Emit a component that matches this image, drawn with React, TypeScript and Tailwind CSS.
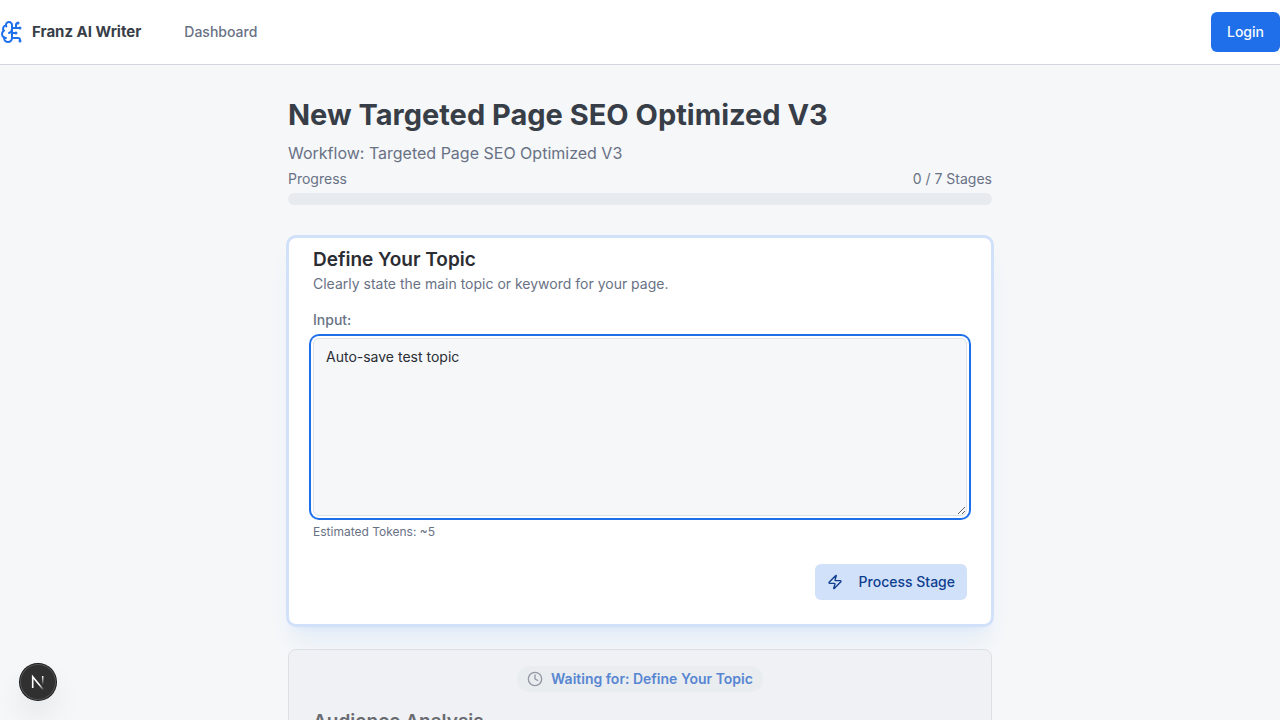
import { useState } from "react";
import { BrainCircuit, Clock, Zap } from "lucide-react";

function Header() {
  return (
    <header className="border-b border-[#d1d6e0] bg-white">
      <div className="flex h-16 items-center justify-between">
        <nav className="flex items-center gap-[43px]">
          <a href="#home" className="flex items-center gap-2">
            <BrainCircuit className="size-6 text-[#1f6feb]" />
            <span className="text-[15px] leading-6 font-bold text-[#383e47]">Franz AI Writer</span>
          </a>
          <a href="#dashboard" className="text-sm font-medium text-[#697185]">
            Dashboard
          </a>
        </nav>
        <a
          href="#login"
          className="flex h-10 items-center rounded-md bg-[#1f6feb] px-4 text-sm font-medium text-[#f8fafc]"
        >
          Login
        </a>
      </div>
    </header>
  );
}

function Progress({ done, total }: { done: number; total: number }) {
  return (
    <div className="mt-1">
      <div className="mb-1 flex justify-between text-sm text-[#697185]">
        <span>Progress</span>
        <span>
          {done} / {total} Stages
        </span>
      </div>
      <div
        role="progressbar"
        aria-label="Progress"
        aria-valuemin={0}
        aria-valuemax={total}
        aria-valuenow={done}
        className="h-3 overflow-hidden rounded-full bg-[#e7eaef]"
      >
        <div className="h-full bg-[#1f6feb]" style={{ width: `${(done / total) * 100}%` }} />
      </div>
    </div>
  );
}

function TopicCard() {
  const [topic, setTopic] = useState("Auto-save test topic");
  return (
    <section className="rounded-lg border border-[#d1e1fa] bg-white px-6 pt-2 pb-6 shadow-xl ring-2 shadow-[#1f6feb]/8 ring-[#d1e1fa]">
      <h2 className="text-[19px] leading-7 font-semibold text-[#2b2d33]">Define Your Topic</h2>
      <p className="text-sm text-[#697185]">Clearly state the main topic or keyword for your page.</p>
      <label htmlFor="topic" className="mt-4 block text-sm font-medium text-[#697185]">
        Input:
      </label>
      <textarea
        id="topic"
        value={topic}
        onChange={(e) => setTopic(e.target.value)}
        className="mt-2 block h-[178px] w-full rounded-md border border-[#dfe2e7] bg-[#f5f7f9] px-3 py-2 text-sm text-[#2b2d33] ring-2 ring-[#1f6feb] ring-offset-2 outline-none"
      />
      <p className="mt-2 text-xs text-[#697185]">Estimated Tokens: ~5</p>
      <div className="mt-6 flex justify-end">
        <button
          type="button"
          className="flex h-9 items-center gap-4 rounded-md bg-[#d1e1fa] px-3 text-sm font-medium text-[#0e3f8f]"
        >
          <Zap className="size-4" />
          Process Stage
        </button>
      </div>
    </section>
  );
}

function WaitingCard() {
  return (
    <section className="mt-6 rounded-lg border border-[#dce0e5] bg-[#e9ebf1]/50 px-6 pt-4 pb-6">
      <div className="flex justify-center">
        <p className="flex items-center gap-2 rounded-full bg-[#e9edf0] px-[10px] py-[3px] text-sm font-semibold text-[#5886d2]">
          <Clock className="size-4 text-[#9598a5]" />
          Waiting for: Define Your Topic
        </p>
      </div>
      <h2 className="mt-4 text-[19px] leading-7 font-semibold text-[#696b70]">Audience Analysis</h2>
    </section>
  );
}

function DevToolsButton() {
  return (
    <button
      type="button"
      aria-label="Open developer tools"
      className="fixed bottom-5 left-5 size-9 rounded-full bg-[#303030] shadow-[0_0_0_1px_#171717,inset_0_0_0_1px_#525252,0_16px_32px_-8px_rgba(0,0,0,0.24)]"
    >
      <svg viewBox="0 0 36 36" fill="none" className="size-9" aria-hidden="true">
        <defs>
          <linearGradient id="diagonal" x1="20" y1="20" x2="24" y2="26" gradientUnits="userSpaceOnUse">
            <stop stopColor="white" />
            <stop offset="1" stopColor="white" stopOpacity="0" />
          </linearGradient>
          <linearGradient id="stem" x1="23" y1="12" x2="23" y2="21" gradientUnits="userSpaceOnUse">
            <stop stopColor="white" />
            <stop offset="1" stopColor="white" stopOpacity="0" />
          </linearGradient>
        </defs>
        <path d="M12.7 24V12.7L23.2 25.5" stroke="url(#diagonal)" strokeWidth="1.6" />
        <path d="M22.7 12V22" stroke="url(#stem)" strokeWidth="1.5" />
      </svg>
    </button>
  );
}

export default function App() {
  return (
    <div className="min-h-screen bg-[#f5f7f9] font-[Inter,sans-serif]">
      <Header />
      <main className="mx-auto max-w-3xl px-8 py-8">
        <h1 className="text-[29px] leading-9 font-bold text-[#383e47]">New Targeted Page SEO Optimized V3</h1>
        <p className="mt-2 text-base leading-6 text-[#697185]">Workflow: Targeted Page SEO Optimized V3</p>
        <Progress done={0} total={7} />
        <div className="mt-8">
          <TopicCard />
          <WaitingCard />
        </div>
      </main>
      <DevToolsButton />
    </div>
  );
}
